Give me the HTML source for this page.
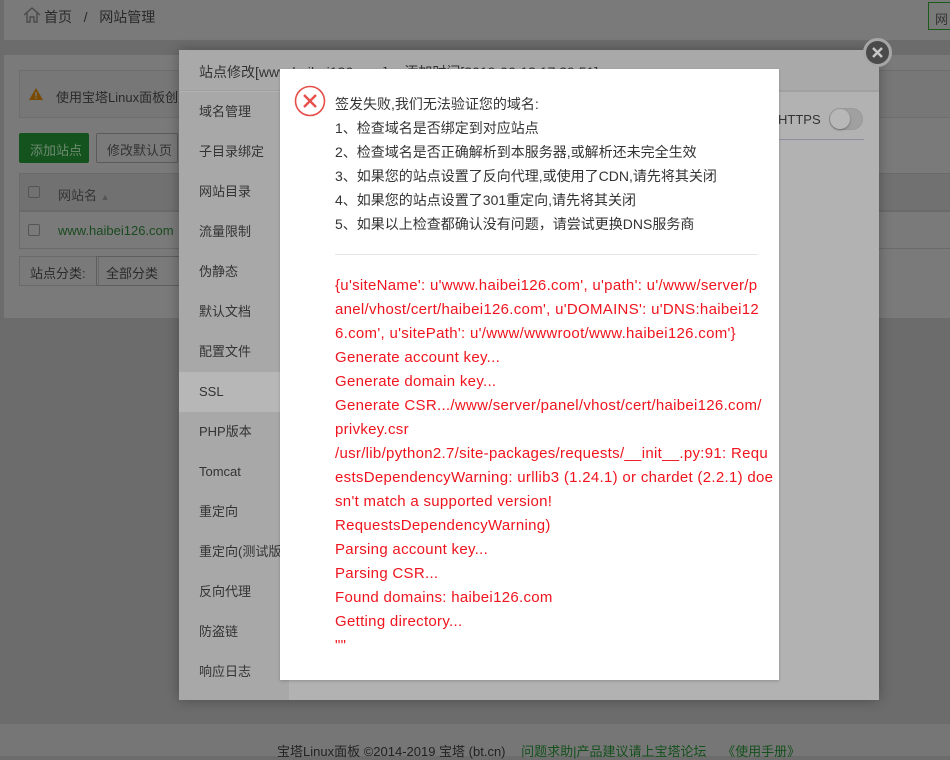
<!DOCTYPE html>
<html><head><meta charset="utf-8"><style>
*{margin:0;padding:0;box-sizing:border-box}
body{width:950px;height:756px;overflow:hidden;background:#6c6c6c;font-family:"Liberation Sans","Noto Sans CJK SC",sans-serif;font-size:13px;color:#2e2e2e;position:relative}
.a{position:absolute}
.t{white-space:nowrap}
</style></head><body>
<div class="a" style="left:4px;top:0;width:946px;height:40px;background:#7a7a7a"></div>
<svg class="a" style="left:22px;top:6px" width="20" height="18" viewBox="0 0 20 18"><path d="M2 9 L10 2 L18 9 M5 7 V16 H8 V11 H12 V16 H15 V7" fill="none" stroke="#4a4a4a" stroke-width="1.4"/></svg>
<div class="a t" style="left:44px;top:7px;font-size:14px;color:#2a2a2a">首页 &nbsp;&nbsp;/ &nbsp;&nbsp;网站管理</div>
<div class="a" style="left:928px;top:2px;width:30px;height:28px;border:1px solid #1a5a1a"></div>
<div class="a t" style="left:935px;top:9px;color:#333">网</div>
<div class="a" style="left:4px;top:55px;width:946px;height:263px;background:#7a7a7a"></div>
<div class="a" style="left:19px;top:70px;width:940px;height:48px;border:1px solid #6e6e6e;background:#777"></div>
<svg class="a" style="left:28px;top:87px" width="16" height="14"><path d="M8 1 L15 13 H1 Z" fill="#7a4a00"/><rect x="7.3" y="5" width="1.4" height="4.5" fill="#777"/><rect x="7.3" y="10.5" width="1.4" height="1.4" fill="#777"/></svg>
<div class="a t" style="left:56px;top:87px;color:#2a2a2a">使用宝塔Linux面板创建</div>
<div class="a" style="left:19px;top:133px;width:70px;height:30px;background:#14531e;border-radius:2px"></div>
<div class="a t" style="left:30px;top:140px;color:#6e8a70">添加站点</div>
<div class="a" style="left:96px;top:133px;width:82px;height:30px;border:1px solid #5a5a5a;border-radius:2px"></div>
<div class="a t" style="left:107px;top:140px;color:#333">修改默认页</div>
<div class="a" style="left:19px;top:173px;width:940px;height:38px;background:#717171;border:1px solid #6a6a6a"></div>
<div class="a" style="left:19px;top:211px;width:940px;height:38px;border:1px solid #6a6a6a"></div>
<div class="a" style="left:28px;top:186px;width:12px;height:12px;border:1px solid #555;border-radius:2px"></div>
<div class="a t" style="left:58px;top:185px;color:#333">网站名 <span style="color:#555;font-size:9px">▲</span></div>
<div class="a" style="left:28px;top:224px;width:12px;height:12px;border:1px solid #555;border-radius:2px"></div>
<div class="a t" style="left:58px;top:223px;color:#1a4a1f">www.haibei126.com</div>
<div class="a" style="left:19px;top:256px;width:80px;height:30px;border:1px solid #6a6a6a"></div>
<div class="a t" style="left:30px;top:263px;color:#2a2a2a">站点分类:</div>
<div class="a" style="left:96px;top:256px;width:100px;height:30px;border:1px solid #5e5e5e"></div>
<div class="a t" style="left:106px;top:263px;color:#2a2a2a">全部分类</div>
<div class="a" style="left:0;top:724px;width:950px;height:32px;background:#767676"></div>
<div class="a t" style="left:277px;top:741px;color:#222">宝塔Linux面板 ©2014-2019 宝塔 (bt.cn) <span style="color:#14501c;margin-left:12px">问题求助|产品建议请上宝塔论坛</span> <span style="color:#14501c;margin-left:12px">《使用手册》</span></div>

<div class="a" style="left:179px;top:50px;width:700px;height:650px;background:#b2b2b2;box-shadow:0 0 12px rgba(0,0,0,.3)"></div>
<div class="a" style="left:179px;top:50px;width:700px;height:41px;background:#a9a9a9;border-bottom:1px solid #a0a0a0"></div>
<div class="a t" style="left:199px;top:62px;font-size:14px;color:#333">站点修改[www.haibei126.com] -- 添加时间[2019-06-13 17:39:51]</div>
<div class="a" style="left:179px;top:92px;width:110px;height:608px;background:#a8a8a8"></div>
<div class="a" style="left:179px;top:372px;width:110px;height:40px;background:#b7b7b7"></div>
<div class="a t" style="left:199px;top:92px;line-height:40px;color:#333;font-size:13px;width:90px;overflow:hidden">
域名管理<br>子目录绑定<br>网站目录<br>流量限制<br>伪静态<br>默认文档<br>配置文件<br>SSL<br>PHP版本<br>Tomcat<br>重定向<br>重定向(测试版)<br>反向代理<br>防盗链<br>响应日志</div>
<div class="a" style="left:289px;top:91px;width:590px;height:1px;background:#a0a0a0"></div>
<div class="a t" style="left:778px;top:112px;color:#333">HTTPS</div>
<div class="a" style="left:829px;top:108px;width:34px;height:22px;border-radius:11px;background:#a0a0a0;border:1px solid #999"></div>
<div class="a" style="left:830px;top:109px;width:20px;height:20px;border-radius:10px;background:#b8b8b8;box-shadow:0 1px 2px rgba(0,0,0,.3)"></div>
<div class="a" style="left:779px;top:139px;width:85px;height:1px;background:#8e8ea0"></div>
<div class="a" style="left:863px;top:38px;width:29px;height:29px;border-radius:50%;background:#4a4a4a;border:3px solid #a6a6a6"></div>
<svg class="a" style="left:869px;top:44px" width="17" height="17"><path d="M4 4 L13 13 M13 4 L4 13" stroke="#c8c8c8" stroke-width="2.4"/></svg>

<div class="a" style="left:280px;top:69px;width:499px;height:611px;background:#fff;box-shadow:0 1px 3px rgba(0,0,0,.2)"></div>
<svg class="a" style="left:294px;top:85px" width="32" height="32"><circle cx="16" cy="16" r="14.5" fill="none" stroke="#e6504a" stroke-width="1.6"/><path d="M10 10 L22 22 M22 10 L10 22" stroke="#e6504a" stroke-width="2.4"/></svg>
<div class="a t" style="left:335px;top:92px;font-size:14px;line-height:24px;color:#333">签发失败,我们无法验证您的域名:<br>1、检查域名是否绑定到对应站点<br>2、检查域名是否正确解析到本服务器,或解析还未完全生效<br>3、如果您的站点设置了反向代理,或使用了CDN,请先将其关闭<br>4、如果您的站点设置了301重定向,请先将其关闭<br>5、如果以上检查都确认没有问题，请尝试更换DNS服务商</div>
<div class="a" style="left:335px;top:254px;width:423px;height:1px;background:#e6e6e6"></div>
<div class="a t" style="left:335px;top:274px;font-size:15px;line-height:24px;color:#f0141e;letter-spacing:0.3px">{u'siteName': u'www.haibei126.com', u'path': u'/www/server/p<br>anel/vhost/cert/haibei126.com', u'DOMAINS': u'DNS:haibei12<br>6.com', u'sitePath': u'/www/wwwroot/www.haibei126.com'}<br>Generate account key...<br>Generate domain key...<br>Generate CSR.../www/server/panel/vhost/cert/haibei126.com/<br>privkey.csr<br>/usr/lib/python2.7/site-packages/requests/__init__.py:91: Requ<br>estsDependencyWarning: urllib3 (1.24.1) or chardet (2.2.1) doe<br>sn't match a supported version!<br>RequestsDependencyWarning)<br>Parsing account key...<br>Parsing CSR...<br>Found domains: haibei126.com<br>Getting directory...<br>""</div>
</body></html>
